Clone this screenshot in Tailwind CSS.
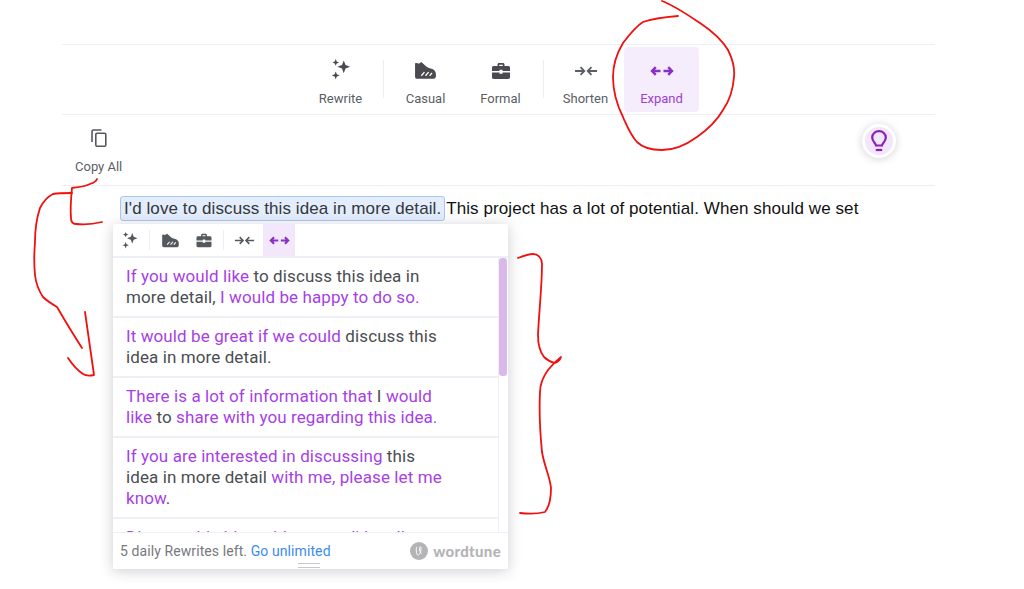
<!DOCTYPE html>
<html lang="en">
<head>
  <meta charset="UTF-8" />
  <title>Wordtune rewrite</title>
  <script src="https://cdn.jsdelivr.net/npm/@tailwindcss/browser@4"></script>
</head>
<body class="bg-white font-['Roboto',sans-serif] h-[589px] w-[1024px] overflow-hidden relative">
  <!-- shared icons -->
  <svg class="hidden">
    <symbol id="i-sparkle" viewBox="0 0 20 20">
      <path d="M12.500 2.200l1.600 4.200 4.200 1.600-4.200 1.600-1.600 4.200-1.600-4.200-4.200-1.600 4.200-1.600z"/>
      <path d="M5.200 1l.9 2.100 2.100.9-2.100.9-.9 2.100-.9-2.100-2.100-.9 2.100-.9z"/>
      <path d="M5.200 12.200l1 2.600 2.600 1-2.600 1-1 2.600-1-2.600-2.600-1 2.600-1z"/>
    </symbol>
    <symbol id="i-shoe" viewBox="0 0 22 18">
      <path d="M1 3c0-.8.500-1.300 1.200-1.100 1 .3 1.800.6 2.800.3L7 .9l5 4.600c2 1.600 5.600 1.600 7.400 3.200 1.100 1 1.600 2.500 1.600 4.300v1c0 1.300-.8 3-2 3H3c-1.200 0-2-.8-2-2z"/>
      <path d="M7 14l3-3.500M11 14l3-3.500M15 14l2.200-2.700" stroke="#fff" stroke-width="1.300" fill="none"/>
    </symbol>
    <symbol id="i-case" viewBox="0 0 20 18">
      <path d="M6.500 4V2.600C6.500 1.700 7.200 1 8.100 1h3.800c.9 0 1.600.7 1.600 1.600V4h3.800C18.300 4 19 4.700 19 5.700V9h-7.500V7.800h-3V9H1V5.700C1 4.700 1.700 4 2.700 4zM8.200 4h3.600V2.700H8.200z"/>
      <path d="M1 10.500h7.500v1.200h3v-1.200H19v4.800c0 1-.7 1.700-1.700 1.700H2.700C1.700 17 1 16.300 1 15.300z"/>
    </symbol>
    <symbol id="i-shorten" viewBox="0 0 24 12">
      <path d="M1 6h9M6.500 2.200L10.300 6 6.500 9.800M23 6h-9M17.500 2.200L13.700 6l3.800 3.800" fill="none" stroke="currentColor" stroke-width="1.800"/>
    </symbol>
    <symbol id="i-expand" viewBox="0 0 24 12">
      <path d="M2 6h8.500M5.800 2.200L2 6l3.800 3.800M22 6h-8.500M18.200 2.200L22 6l-3.800 3.800" fill="none" stroke="currentColor" stroke-width="2.400"/>
    </symbol>
  </svg>

  <main class="ml-[62px] w-[873px] pt-[44px]">
    <!-- top toolbar -->
    <div class="h-[71px] border-y border-[#eeeef6] flex justify-center items-center pl-[5px]">
      <div class="w-[75px] h-[65px] flex flex-col items-center text-[#5a5e64] fill-[#4a4a50]">
        <svg class="w-[22px] h-[22px] mt-[11px]"><use href="#i-sparkle"/></svg>
        <span class="text-[13px] leading-[15px] mt-[11px]">Rewrite</span>
      </div>
      <div class="w-px h-[38px] bg-[#eeeef2] mx-[4.5px] -mt-[1px]"></div>
      <div class="w-[75px] h-[65px] flex flex-col items-center text-[#5a5e64] fill-[#4a4a50]">
        <svg class="w-[23px] h-[19px] mt-[14px]"><use href="#i-shoe"/></svg>
        <span class="text-[13px] leading-[15px] mt-[11px]">Casual</span>
      </div>
      <div class="w-[75px] h-[65px] flex flex-col items-center text-[#5a5e64] fill-[#4a4a50]">
        <svg class="w-[20px] h-[18px] mt-[15px]"><use href="#i-case"/></svg>
        <span class="text-[13px] leading-[15px] mt-[11px]">Formal</span>
      </div>
      <div class="w-px h-[38px] bg-[#eeeef2] mx-[4.5px] -mt-[1px]"></div>
      <div class="w-[75px] h-[65px] flex flex-col items-center text-[#5a5e64]">
        <svg class="w-[24px] h-[12px] mt-[18px]"><use href="#i-shorten"/></svg>
        <span class="text-[13px] leading-[15px] mt-[14px]">Shorten</span>
      </div>
      <div class="w-[75px] h-[65px] ml-px flex flex-col items-center rounded-[4px] bg-[#f5edfc] text-[#9a3fd0]">
        <svg class="w-[24px] h-[12px] mt-[18px] text-[#8a2fc4]"><use href="#i-expand"/></svg>
        <span class="text-[13px] leading-[15px] mt-[14px]">Expand</span>
      </div>
    </div>

    <!-- second row -->
    <div class="h-[71px] border-b border-[#eeeef2] flex justify-between pl-[13px] pr-[39px]">
      <div class="flex flex-col items-center text-[#5a5e64]">
        <svg class="w-[16px] h-[18px] mt-[14px]" viewBox="0 0 16 18" fill="none" stroke="#55585e" stroke-width="1.600">
          <path d="M10.500 1H2.500C1.700 1 1 1.700 1 2.500V13"/>
          <rect x="4.800" y="4.300" width="10" height="12.900" rx="1.200"/>
        </svg>
        <span class="text-[13px] leading-[15px] mt-[12px]">Copy All</span>
      </div>
      <div class="w-[34px] h-[34px] mt-[9px] rounded-full bg-[#f2e6fb] border-[3px] border-white shadow-[0_1px_8px_rgba(0,0,0,0.18)] flex items-center justify-center">
        <svg class="w-[16px] h-[22px]" viewBox="0 0 16 22" fill="none" stroke="#8a20b8" stroke-width="2.200">
          <path d="M5 15.500c0-2.500-3.800-3.600-3.800-8C1.200 3.800 4.200 1.200 8 1.200s6.800 2.600 6.800 6.300c0 4.400-3.800 5.500-3.800 8z"/>
          <path d="M4.800 20h6.400"/>
        </svg>
      </div>
    </div>

    <!-- editor text -->
    <div class="relative pt-[10px] pl-[58px] whitespace-nowrap font-['Liberation_Sans',sans-serif] text-[17px] leading-[25px] text-[#111] tracking-[0.09px]">
      <span class="inline-block h-[25px] px-[3px] mr-[1px] bg-[#e3edfc] border border-[#a9c6f2] rounded-[3px] leading-[23px] text-[#33373d]">I'd love to discuss this idea in more detail.</span><span>This project has a lot of potential. When should we set</span>

      <!-- rewrite popup -->
      <div class="absolute left-[51px] top-[38px] w-[395px] h-[345px] bg-white shadow-[0_2px_14px_rgba(30,30,60,0.22)] rounded-[2px] whitespace-normal overflow-hidden flex flex-col font-['Roboto',sans-serif]">
        <div class="h-[34px] shrink-0 flex items-center pl-[8px] border-b-2 border-[#eef0f6] text-[#555a60] fill-[#55585e]">
          <svg class="w-[18px] h-[18px]"><use href="#i-sparkle"/></svg>
          <div class="w-px h-[20px] bg-[#eeeef2] ml-[10px]"></div>
          <svg class="w-[19px] h-[15px] ml-[11px]"><use href="#i-shoe"/></svg>
          <svg class="w-[18px] h-[15px] ml-[15px]"><use href="#i-case"/></svg>
          <div class="w-px h-[20px] bg-[#eeeef2] ml-[10px]"></div>
          <svg class="w-[21px] h-[11px] ml-[10px]"><use href="#i-shorten"/></svg>
          <div class="w-[32px] h-[32px] ml-[8px] bg-[#f3e8fb] flex items-center justify-center text-[#8a2fc4]">
            <svg class="w-[21px] h-[11px]"><use href="#i-expand"/></svg>
          </div>
        </div>

        <div class="relative flex-1 overflow-hidden text-[17px] leading-[21px] text-[#4a4d52] tracking-[0.1px]">
          <div class="absolute right-0 top-0 bottom-0 w-[10px] border-l border-[#eef0f6]"></div>
          <div class="absolute right-[1px] top-0 w-[8px] h-[118px] rounded-[3px] bg-[#d9b9ec]"></div>
          <div class="h-[60px] pt-[8px] pl-[13px] w-[385px] border-b-2 border-[#eef0f6]">
            <p class="w-[320px]"><span class="text-[#a63fe6]">If you would like</span> to discuss this idea in more detail, <span class="text-[#a63fe6]">I would be happy to do so.</span></p>
          </div>
          <div class="h-[60px] pt-[8px] pl-[13px] w-[385px] border-b-2 border-[#eef0f6]">
            <p class="w-[320px]"><span class="text-[#a63fe6]">It would be great if we could</span> discuss this idea in more detail.</p>
          </div>
          <div class="h-[60px] pt-[8px] pl-[13px] w-[385px] border-b-2 border-[#eef0f6]">
            <p class="w-[320px]"><span class="text-[#a63fe6]">There is a lot of information that</span> I <span class="text-[#a63fe6]">would like</span> to <span class="text-[#a63fe6]">share with you regarding this idea.</span></p>
          </div>
          <div class="h-[81px] pt-[8px] pl-[13px] w-[385px] border-b-2 border-[#eef0f6]">
            <p class="w-[320px]"><span class="text-[#a63fe6]">If you are interested in discussing</span> this idea in more detail <span class="text-[#a63fe6]">with me, please let me know</span>.</p>
          </div>
          <div class="h-[60px] pt-[8px] pl-[13px] w-[385px]">
            <p class="w-[320px]"><span class="text-[#a63fe6]">Discuss this idea with me, as I'd really</span></p>
          </div>
        </div>

        <div class="relative h-[37px] shrink-0 bg-white border-t border-[#f0f0f4] flex items-center justify-between pl-[7px] pr-[7px] text-[14px] text-[#77797d]">
          <span>5 daily Rewrites left. <span class="text-[#3b8bf2]">Go unlimited</span></span>
          <span class="flex items-center gap-[5px] font-['Lato',sans-serif] font-black text-[15px] text-[#b4b4b6] tracking-[0.3px]">
            <svg class="w-[18px] h-[18px]" viewBox="0 0 18 18"><circle cx="9" cy="9" r="9" fill="#b4b4b6"/><path d="M6.500 5c-.5 3.500-.2 8 1.500 8 1.500 0 3.500-4 3-7.500-.3-1.500-1.500-.8-1.500 1 0 2.500.7 4 2 5" fill="none" stroke="#fff" stroke-width="1"/></svg>
            wordtune
          </span>
          <div class="absolute left-[185px] bottom-[1px] w-[22px] h-[5px] border-y border-[#c9c9cd]"></div>
        </div>
      </div>
    </div>
  </main>

  <!-- red hand-drawn marks over the screenshot -->
  <svg class="absolute left-0 top-0 pointer-events-none" width="1024" height="589" fill="none" stroke="#f01010" stroke-width="1.800" stroke-linecap="round" stroke-linejoin="round">
    <path d="M662 1C675 6 688 15 700 23C712 31 722 40 728 50C733 60 735 68 734 77C733 90 730 100 723 110C716 122 707 130 697 137C686 145 674 150 662 150C652 150 643 148 637 142C630 134 627 126 623 117C617 105 613 92 613 77C613 64 617 53 623 43C629 35 635 27 643 22C654 18 666 17 678 16"/>
    <path d="M97 179C96 182 93 183 90 184C84 187 78 187 72 188C71 198 70 208 71 218C71 222 73 224 76 224C85 225 94 224 102 222"/>
    <path d="M72 193C65 193 59 193 53 194C47 197 43 202 40 208C36 220 35 231 35 242C34 254 34 265 35 275C36 284 39 291 43 297C47 301 52 304 57 307C64 319 73 334 82 348"/>
    <path d="M85 312C88 333 91 354 94 375C89 376 86 376 83 374C77 370 72 364 68 358"/>
    <path d="M518 258C523 256 528 254 533 254C538 254 542 258 542 264C542 287 539 311 538 335C538 345 540 352 544 357C548 361 551 362 555 363C558 362 560 360 561 357C556 361 552 365 548 370C543 377 540 384 540 392C539 412 540 432 542 452C544 465 550 477 551 488C551 498 549 507 545 512C537 514 529 514 520 513"/>
  </svg>
</body>
</html>
